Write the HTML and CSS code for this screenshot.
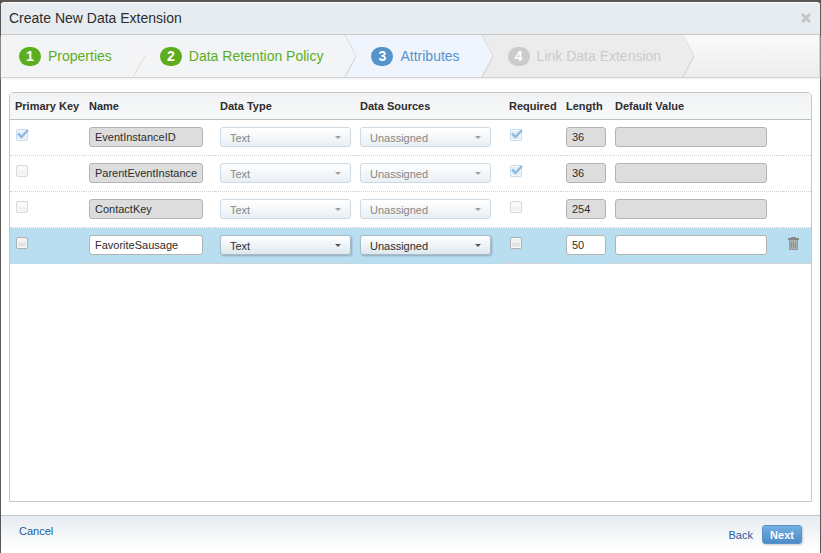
FILE: index.html
```
<!DOCTYPE html>
<html lang="en">
<head>
<meta charset="utf-8">
<title>Create New Data Extension</title>
<link rel="stylesheet" href="styles.css">
</head>
<body>
<main class="dialog">
  <header class="titlebar">
    <h1>Create New Data Extension</h1>
    <button class="close" type="button" aria-label="Close">
      <svg width="10" height="10" viewBox="0 0 10 10"><path d="M1 1l8 8M9 1l-8 8" stroke="#c3c6c8" stroke-width="3"/></svg>
    </button>
  </header>

  <ol class="steps">
    <li class="step done">
      <span class="badge">1</span><span>Properties</span>
      <svg class="chevron" width="14" height="42" viewBox="0 0 14 42"><path class="face" d="M0 0L12 21L0 42z"/><path class="edge" d="M12 21L0 42"/></svg>
    </li>
    <li class="step done">
      <span class="badge">2</span><span>Data Retention Policy</span>
      <svg class="chevron" width="14" height="42" viewBox="0 0 14 42"><path class="face" d="M0 0L12 21L0 42z"/><path class="edge" d="M1 0L12 21"/><path class="edge strong" d="M12 21L1 42"/></svg>
    </li>
    <li class="step current" aria-current="step">
      <span class="badge">3</span><span>Attributes</span>
      <svg class="chevron" width="14" height="42" viewBox="0 0 14 42"><path class="face" d="M0 0L12 21L0 42z"/><path class="edge" d="M1 0L12 21"/><path class="edge strong" d="M12 21L1 42"/></svg>
    </li>
    <li class="step todo">
      <span class="badge">4</span><span>Link Data Extension</span>
      <svg class="chevron" width="14" height="42" viewBox="0 0 14 42"><path class="face" d="M0 0L12 21L0 42z"/><path class="edge" d="M1 0L12 21"/><path class="edge strong" d="M12 21L1 42"/></svg>
    </li>
  </ol>

  <section class="panel">
    <table class="fields">
      <colgroup><col class="c-key"><col class="c-name"><col class="c-type"><col class="c-source"><col class="c-required"><col class="c-length"><col class="c-default"><col class="c-action"></colgroup>
      <thead>
        <tr><th>Primary Key</th><th>Name</th><th>Data Type</th><th>Data Sources</th><th>Required</th><th>Length</th><th>Default Value</th><th></th></tr>
      </thead>
      <tbody>
        <tr>
          <td><span class="check"><input type="checkbox" aria-label="Primary Key" checked disabled><svg width="13" height="12" viewBox="0 0 13 12"><path d="M2 5.500L5.500 9L12 2" fill="none" stroke="#91bbe0" stroke-width="2.500"/></svg></span></td>
          <td><input class="text name" type="text" aria-label="Name" value="EventInstanceID" disabled></td>
          <td><span class="drop"><select aria-label="Data Type" disabled><option>Text</option></select></span></td>
          <td><span class="drop"><select aria-label="Data Sources" disabled><option>Unassigned</option></select></span></td>
          <td><span class="check"><input type="checkbox" aria-label="Required" checked disabled><svg width="13" height="12" viewBox="0 0 13 12"><path d="M2 5.500L5.500 9L12 2" fill="none" stroke="#91bbe0" stroke-width="2.500"/></svg></span></td>
          <td><input class="text length" type="text" aria-label="Length" value="36" disabled></td>
          <td><input class="text default" type="text" aria-label="Default Value" disabled></td>
          <td></td>
        </tr>
        <tr>
          <td><span class="check"><input type="checkbox" aria-label="Primary Key" disabled></span></td>
          <td><input class="text name" type="text" aria-label="Name" value="ParentEventInstance" disabled></td>
          <td><span class="drop"><select aria-label="Data Type" disabled><option>Text</option></select></span></td>
          <td><span class="drop"><select aria-label="Data Sources" disabled><option>Unassigned</option></select></span></td>
          <td><span class="check"><input type="checkbox" aria-label="Required" checked disabled><svg width="13" height="12" viewBox="0 0 13 12"><path d="M2 5.500L5.500 9L12 2" fill="none" stroke="#91bbe0" stroke-width="2.500"/></svg></span></td>
          <td><input class="text length" type="text" aria-label="Length" value="36" disabled></td>
          <td><input class="text default" type="text" aria-label="Default Value" disabled></td>
          <td></td>
        </tr>
        <tr>
          <td><span class="check"><input type="checkbox" aria-label="Primary Key" disabled></span></td>
          <td><input class="text name" type="text" aria-label="Name" value="ContactKey" disabled></td>
          <td><span class="drop"><select aria-label="Data Type" disabled><option>Text</option></select></span></td>
          <td><span class="drop"><select aria-label="Data Sources" disabled><option>Unassigned</option></select></span></td>
          <td><span class="check"><input type="checkbox" aria-label="Required" disabled></span></td>
          <td><input class="text length" type="text" aria-label="Length" value="254" disabled></td>
          <td><input class="text default" type="text" aria-label="Default Value" disabled></td>
          <td></td>
        </tr>
        <tr class="selected">
          <td><span class="check"><input type="checkbox" aria-label="Primary Key"></span></td>
          <td><input class="text name" type="text" aria-label="Name" value="FavoriteSausage"></td>
          <td><span class="drop"><select aria-label="Data Type"><option>Text</option></select></span></td>
          <td><span class="drop"><select aria-label="Data Sources"><option>Unassigned</option></select></span></td>
          <td><span class="check"><input type="checkbox" aria-label="Required"></span></td>
          <td><input class="text length" type="text" aria-label="Length" value="50"></td>
          <td><input class="text default" type="text" aria-label="Default Value"></td>
          <td><button class="trash" type="button" aria-label="Delete">
            <svg width="11" height="13" viewBox="0 0 11 13"><path d="M3 0h5v1h3v2H0V1h3z" fill="#858788"/><path d="M1 3h9v10H1z" fill="#a9adae"/><path d="M1.500 3v9.500h8V3" fill="none" stroke="#979a9b"/><path d="M3.500 5v6M5.500 5v6M7.500 5v6" stroke="#8b9194"/></svg>
          </button></td>
        </tr>
      </tbody>
    </table>
  </section>

  <footer class="actions">
    <a class="cancel" href="#">Cancel</a>
    <a class="back" href="#">Back</a>
    <button class="next" type="button">Next</button>
  </footer>
</main>
</body>
</html>
```
FILE: styles.css
```
* {
  box-sizing: border-box;
}

body {
  margin: 0;
  background: #5a5654;
  color: #2d2d2d;
  font: 11px/14px "Liberation Sans", Arial, sans-serif;
}

.dialog {
  display: flex;
  flex-direction: column;
  min-height: 100vh;
  border: solid #5a5654;
  border-width: 2px 1px 0;
  border-radius: 5px;
  background: #fff;
}

.titlebar {
  display: flex;
  align-items: center;
  justify-content: space-between;
  height: 33px;
  padding: 0 9px 2px 8px;
  border-top: 1px solid #fff;
  border-bottom: 1px solid #c5c5c3;
  border-radius: 4px 4px 0 0;
  background: #e7ecf0;
}

h1 {
  margin: 0;
  font-size: 14px;
  font-weight: 400;
  line-height: 20px;
}

.close,
.trash {
  display: block;
  padding: 0;
  border: 0;
  background: none;
}

.close svg,
.trash svg {
  display: block;
}

.steps {
  display: flex;
  height: 43px;
  margin: 0;
  padding: 0;
  border: solid #d2d2d2;
  border-width: 0 1px 1px 0;
  background: linear-gradient(#fafafa, #ededee);
  box-shadow: 0 1px 2px #eee;
  list-style: none;
}

.step {
  --face: #f3f4f6;
  --ink: #5cae1e;
  position: relative;
  display: flex;
  align-items: center;
  gap: 7px;
  padding: 0 21px 0 27px;
  background: var(--face);
  color: var(--ink);
  font-size: 14px;
  line-height: 20px;
  white-space: nowrap;
}

.step:first-child {
  padding-left: 18px;
}

.current {
  --face: #f0f5fd;
  --ink: #5593cb;
}

.todo {
  --face: #ececec;
  --ink: #cbcbcb;
}

.badge {
  width: 22px;
  height: 19px;
  border-radius: 10px;
  background: var(--ink);
  color: #fff;
  font-size: 14px;
  font-weight: 700;
  line-height: 19px;
  text-align: center;
}

.chevron {
  position: absolute;
  z-index: 1;
  top: 0;
  left: 100%;
}

.face {
  fill: var(--face);
}

.edge {
  fill: none;
  stroke: #dedede;
}

.strong {
  stroke: #cfcfcf;
}

.panel {
  flex: 1;
  margin: 14px 8px 13px;
  border: 1px solid #c6c8c8;
  border-radius: 4px 4px 0 0;
}

.fields {
  width: 100%;
  border-spacing: 0;
  table-layout: fixed;
}

.c-key { width: 74px; }
.c-name { width: 131px; }
.c-type { width: 140px; }
.c-source { width: 149px; }
.c-required { width: 57px; }
.c-length { width: 49px; }
.c-action { width: 28px; }

th {
  height: 27px;
  padding: 0 0 0 5px;
  border-bottom: 1px solid #b9c2c1;
  background: linear-gradient(#f1f2f4, #f8f9f9);
  text-align: left;
  white-space: nowrap;
}

td {
  height: 36px;
  padding: 7px 0 0 5px;
  border-bottom: 1px dotted #cfcfcf;
  vertical-align: top;
}

.selected td {
  background: #b9def0;
}

.text,
select {
  display: block;
  height: 20px;
  margin: 0;
  border: 1px solid #b3b3b3;
  border-radius: 3px;
  background: #fff;
  color: #2d2d2d;
  font: inherit;
}

.text {
  padding: 0 5px;
}

.text:disabled {
  background: #ddd;
}

.name { width: 114px; }
.length { width: 40px; }
.default { width: 152px; }

.drop {
  position: relative;
  display: block;
  width: 131px;
}

.drop::after {
  position: absolute;
  top: 9px;
  right: 10px;
  border: 3px solid transparent;
  border-top-color: #555;
  border-bottom: 0;
  content: "";
}

select {
  width: 100%;
  padding: 1px 9px 0;
  border-color: #a9bccb;
  background: linear-gradient(#fff, #dfe8ef);
  box-shadow: 1px 1px 2px #8fa9b8;
  appearance: none;
}

select:disabled {
  border-color: #cddae4;
  background: linear-gradient(#fff, #e9eff4);
  box-shadow: none;
  color: #868686;
  opacity: 1;
}

.drop:has(:disabled)::after {
  border-top-color: #a0a0a0;
}

.check {
  position: relative;
  display: block;
  padding: 2px 1px;
}

.check input {
  display: block;
  width: 12px;
  height: 12px;
  margin: 0;
  border: 1px solid #b0b0b0;
  border-radius: 2px;
  background: linear-gradient(#f0f0f0 50%, #dcdcdc 50%, #eee);
  box-shadow: inset 0 0 0 1px #f7f7f7;
  appearance: none;
}

.check input:disabled {
  border-color: #d9d9d9;
  background: linear-gradient(#fafafa 50%, #efefef 50%, #f7f7f7);
}

.check input:checked {
  border-color: #c5dbed;
  background: #e3eff9;
}

.check svg {
  position: absolute;
  top: 1px;
  left: 1px;
}

.trash {
  margin: 2px 0 0;
}

.actions {
  display: flex;
  align-items: center;
  gap: 9px;
  height: 38px;
  padding: 0 18px;
  border-top: 1px solid #c3c6c9;
  background: linear-gradient(#e7ecf0, #fff 90%);
}

.actions a {
  color: #1c5a9c;
  text-decoration: none;
}

.cancel {
  margin: 0 auto 7px 0;
}

.next {
  width: 40px;
  height: 19px;
  padding: 0;
  border: 1px solid #5a93c8;
  border-radius: 3px;
  background: linear-gradient(#73afe2, #4c8bc6);
  box-shadow: 1px 1px 2px #ccc;
  color: #fff;
  font: inherit;
  font-weight: 700;
}
```
